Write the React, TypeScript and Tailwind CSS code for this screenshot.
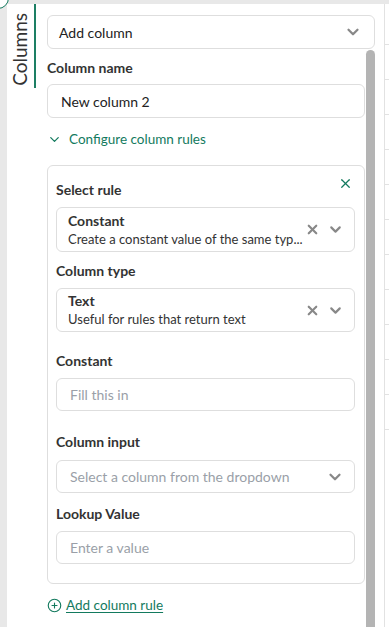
import { ChevronDown, X, CirclePlus } from 'lucide-react';

const font = { fontFamily: 'Lato, "Liberation Sans", sans-serif' };

const Label = ({ children, className = '' }: { children: string; className?: string }) => (
  <div className={`text-[14px] font-bold text-[#333] leading-5 ${className}`}>{children}</div>
);

const Field = ({ placeholder, chevron = false }: { placeholder: string; chevron?: boolean }) => (
  <div className="h-[33px] border border-[#dedede] rounded-md flex items-center pl-[13px] pr-[10px] bg-white">
    <span className="flex-1 min-w-0 text-[14px] text-[#9a9fa8]">{placeholder}</span>
    {chevron && <ChevronDown className="w-[18px] h-[18px] text-[#888]" strokeWidth={3} />}
  </div>
);

const RuleSelect = ({ title, sub, h }: { title: string; sub: string; h: string }) => (
  <div className={`${h} border border-[#dedede] rounded-md flex items-center pl-[11px] pr-[10px]`}>
    <div className="flex-1 min-w-0 pr-[6px]">
      <div className="text-[14px] font-bold text-[#333] leading-[18px]">{title}</div>
      <div className="text-[13px] text-[#333] leading-[18px] whitespace-nowrap">{sub}</div>
    </div>
    <div className="flex items-center gap-[7px] text-[#888] shrink-0">
      <X className="w-[15px] h-[15px]" strokeWidth={3.5} />
      <ChevronDown className="w-[17px] h-[17px]" strokeWidth={3} />
    </div>
  </div>
);

const App = () => {
  return (
    <div className="relative w-[389px] h-[627px] bg-[#e8e8e8] pt-[4px] pl-[7px] overflow-hidden" style={font}>
      <div className="absolute -left-[13px] -top-[13px] w-[22px] h-[22px] rounded-full border border-[#137a5e] bg-white z-10" />
      <div className="flex h-full bg-white">
        {/* tab */}
        <div className="w-[29px] shrink-0">
          <div className="h-[84px] pt-[6px] border-r-2 border-[#1d7f64] flex items-center justify-center">
            <span className="[writing-mode:vertical-rl] rotate-180 text-[19px] text-[#333]">Columns</span>
          </div>
        </div>

        {/* main */}
        <div className="w-[339px] shrink-0 pl-[11px] flex flex-col">
          <div className="mt-[11px] h-[34px] border border-[#dedede] rounded-md flex items-center pl-[11px] pr-[12px]">
            <span className="flex-1 text-[14px] text-[#222]">Add column</span>
            <ChevronDown className="w-[18px] h-[18px] text-[#888]" strokeWidth={3} />
          </div>
          <div className="flex flex-1 mt-[1px] min-h-0">
            <div className="flex-1 min-w-0 pr-[1px]">
              <Label className="mt-[8px]">Column name</Label>
              <div className="mt-[6px] h-[34px] border border-[#dedede] rounded-md flex items-center pl-[13px]">
                <span className="text-[14px] text-[#222]">New column 2</span>
              </div>
              <div className="mt-[12px] h-[18px] flex items-center text-[#137a5e]">
                <ChevronDown className="w-[15px] h-[15px]" strokeWidth={2} />
                <span className="ml-[7px] text-[13.5px]">Configure column rules</span>
              </div>
              <div className="relative mt-[17px] border border-[#dedede] rounded-md pl-[8px] pr-[9px] pt-[14px] pb-[19px]">
                <X className="absolute right-[11px] top-[10px] w-[15px] h-[15px] text-[#137a5e]" strokeWidth={2} />
                <Label>Select rule</Label>
                <div className="mt-[7px]">
                  <RuleSelect h="h-[45px]" title="Constant" sub="Create a constant value of the same typ..." />
                </div>
                <Label className="mt-[9px]">Column type</Label>
                <div className="mt-[7px]">
                  <RuleSelect h="h-[44px]" title="Text" sub="Useful for rules that return text" />
                </div>
                <Label className="mt-[19px]">Constant</Label>
                <div className="mt-[7px]">
                  <Field placeholder="Fill this in" />
                </div>
                <Label className="mt-[21px]">Column input</Label>
                <div className="mt-[8px]">
                  <Field placeholder="Select a column from the dropdown" chevron />
                </div>
                <Label className="mt-[11px]">Lookup Value</Label>
                <div className="mt-[7px]">
                  <Field placeholder="Enter a value" />
                </div>
              </div>
              <div className="mt-[12px] h-[18px] flex items-center text-[#137a5e]">
                <CirclePlus className="w-[15px] h-[15px]" strokeWidth={1.8} />
                <span className="ml-[4px] text-[13.5px] underline underline-offset-2">Add column rule</span>
              </div>
            </div>
            <div className="w-[9px] shrink-0 bg-[#b4b4b4] rounded-t-full" />
          </div>
        </div>

        <div className="w-[9px] shrink-0" />
        {/* table edge */}
        <div className="flex-1 border-l border-[#e2e2e2] pt-[40px]">
          {Array.from({ length: 12 }).map((_, i) => (
            <div key={i} className="h-[35px] border-t border-[#e2e2e2]" />
          ))}
        </div>
      </div>
    </div>
  );
};

export default App;
